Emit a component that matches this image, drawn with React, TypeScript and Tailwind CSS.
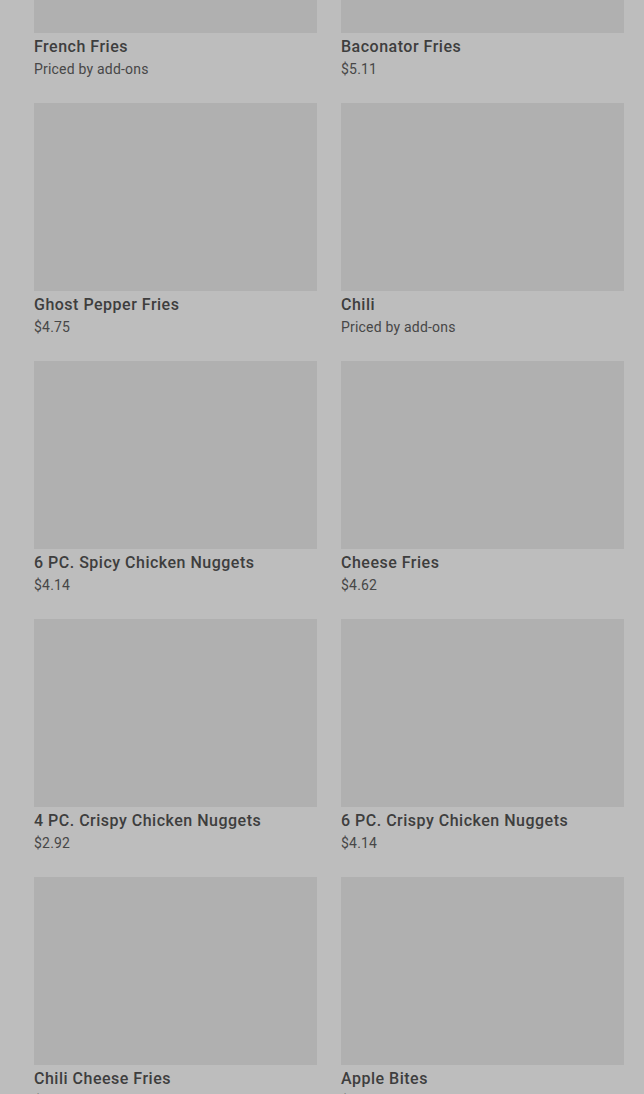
import React from "react";

interface MenuItem {
  name: string;
  price: string;
}

const items: MenuItem[] = [
  { name: "French Fries", price: "Priced by add-ons" },
  { name: "Baconator Fries", price: "$5.11" },
  { name: "Ghost Pepper Fries", price: "$4.75" },
  { name: "Chili", price: "Priced by add-ons" },
  { name: "6 PC. Spicy Chicken Nuggets", price: "$4.14" },
  { name: "Cheese Fries", price: "$4.62" },
  { name: "4 PC. Crispy Chicken Nuggets", price: "$2.92" },
  { name: "6 PC. Crispy Chicken Nuggets", price: "$4.14" },
  { name: "Chili Cheese Fries", price: "$4.62" },
  { name: "Apple Bites", price: "$1.99" },
];

function MenuCard({ item }: { item: MenuItem }) {
  return (
    <div className="flex flex-col">
      <div className="h-[188px] w-full bg-[#b0b0b0]" />
      <div className="mt-[2px] text-[16px] leading-6 font-medium tracking-[0.5px] text-[#3e3e3e]">{item.name}</div>
      <div className="text-[14px] leading-5 tracking-[0.2px] text-[#474747]">{item.price}</div>
    </div>
  );
}

export default function App() {
  return (
    <div
      className="h-[1094px] w-[644px] overflow-hidden bg-[#bdbdbd]"
      style={{ fontFamily: "Roboto, 'Noto Sans', sans-serif" }}
    >
      <div className="-mt-[155px] grid grid-cols-2 gap-x-6 gap-y-6 pl-[34px] pr-[20px]">
        {items.map((item, i) => (
          <MenuCard key={i} item={item} />
        ))}
      </div>
    </div>
  );
}
